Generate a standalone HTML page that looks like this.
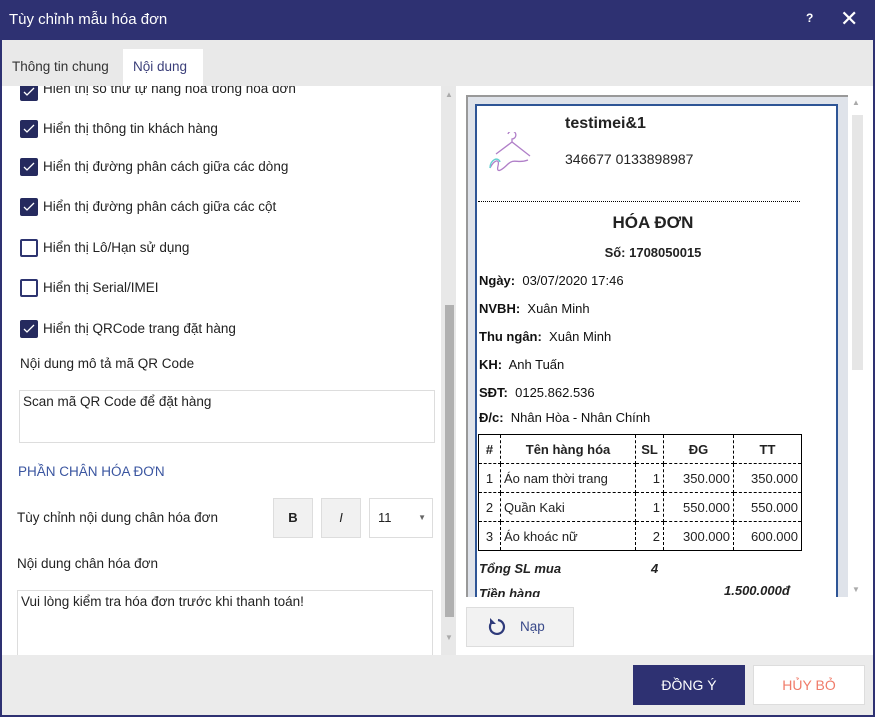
<!DOCTYPE html>
<html><head><meta charset="utf-8"><style>
*{box-sizing:border-box;margin:0;padding:0}
body{width:875px;height:717px;position:relative;overflow:hidden;background:#fff;font-family:"Liberation Sans","DejaVu Sans",sans-serif;font-size:13.5px;color:#222}
.abs{position:absolute}
.title{left:0;top:0;width:875px;height:40px;background:#2e3172;color:#fff;font-size:15px;line-height:40px;padding-left:9px}
.tabs{left:0;top:40px;width:875px;height:46px;background:#e9e9e9;border-left:2px solid #2e3172;border-right:2px solid #2e3172}
.cb{left:20px;width:18px;height:18px;border-radius:2px;background:#252a5e}
.cb svg{position:absolute;left:3px;top:4px}
.cbo{left:20px;width:18px;height:18px;border-radius:2px;border:2px solid #2d3470;background:#fff}
.lbl{left:43px;font-size:13.5px;color:#222}
.box{border:1px solid #ddd;background:#fff}
.inv{font-size:13px;color:#111}
.b{font-weight:bold}
td{border:1px dashed #000;font-size:13px;height:29px;padding:0 3px}
table{border-collapse:collapse;border:1.5px solid #000}
</style></head><body>
<div class="abs title">Tùy chỉnh mẫu hóa đơn</div>
<div class="abs" style="left:806px;top:11px;color:#fff;font-weight:bold;font-size:12px">?</div>
<div class="abs" style="left:840px;top:6px;color:#fff;font-size:22px;font-weight:bold">✕</div>
<div class="abs tabs"></div>
<div class="abs" style="left:12px;top:59px;font-size:13.5px;color:#333">Thông tin chung</div>
<div class="abs" style="left:123px;top:49px;width:80px;height:38px;background:#fff;color:#3b3f7a;font-size:13.5px;padding:10px 0 0 10px">Nội dung</div>
<div class="abs" style="left:0;top:86px;width:2px;height:570px;background:#2e3172"></div>
<div class="abs" style="left:873px;top:86px;width:2px;height:570px;background:#2e3172"></div>

<!-- left list -->
<div class="abs" style="left:2px;top:86px;width:454px;height:569px;overflow:hidden">
<div class="abs cb" style="left:18px;top:-3px"><svg width="12" height="10"><path d="M1 5l3 3 7-7" stroke="#fff" stroke-width="1.3" fill="none"/></svg></div>
<div class="abs lbl" style="left:41px;top:-5px">Hiển thị số thứ tự hàng hóa trong hóa đơn</div>
</div>
<div class="abs cb" style="top:120px"><svg width="12" height="10"><path d="M1 5l3 3 7-7" stroke="#fff" stroke-width="1.3" fill="none"/></svg></div>
<div class="abs lbl" style="top:121px">Hiển thị thông tin khách hàng</div>
<div class="abs cb" style="top:158px"><svg width="12" height="10"><path d="M1 5l3 3 7-7" stroke="#fff" stroke-width="1.3" fill="none"/></svg></div>
<div class="abs lbl" style="top:159px">Hiển thị đường phân cách giữa các dòng</div>
<div class="abs cb" style="top:198px"><svg width="12" height="10"><path d="M1 5l3 3 7-7" stroke="#fff" stroke-width="1.3" fill="none"/></svg></div>
<div class="abs lbl" style="top:199px">Hiển thị đường phân cách giữa các cột</div>
<div class="abs cbo" style="top:239px"></div>
<div class="abs lbl" style="top:240px">Hiển thị Lô/Hạn sử dụng</div>
<div class="abs cbo" style="top:279px"></div>
<div class="abs lbl" style="top:280px">Hiển thị Serial/IMEI</div>
<div class="abs cb" style="top:320px"><svg width="12" height="10"><path d="M1 5l3 3 7-7" stroke="#fff" stroke-width="1.3" fill="none"/></svg></div>
<div class="abs lbl" style="top:321px">Hiển thị QRCode trang đặt hàng</div>
<div class="abs" style="left:20px;top:356px">Nội dung mô tả mã QR Code</div>
<div class="abs box" style="left:19px;top:390px;width:416px;height:53px;padding:3px 3px;color:#222">Scan mã QR Code để đặt hàng</div>
<div class="abs" style="left:18px;top:464px;color:#3a55a0">PHẦN CHÂN HÓA ĐƠN</div>
<div class="abs" style="left:17px;top:510px">Tùy chỉnh nội dung chân hóa đơn</div>
<div class="abs" style="left:273px;top:498px;width:40px;height:40px;background:#f1f1f1;border:1px solid #ddd;text-align:center;line-height:38px;font-weight:bold;font-size:13px">B</div>
<div class="abs" style="left:321px;top:498px;width:40px;height:40px;background:#f1f1f1;border:1px solid #ddd;text-align:center;line-height:38px;font-style:italic;font-size:13px">I</div>
<div class="abs box" style="left:369px;top:498px;width:64px;height:40px;line-height:38px;padding-left:8px;font-size:13px">11<span style="position:absolute;right:6px;top:0;font-size:8px;color:#666">▼</span></div>
<div class="abs" style="left:17px;top:556px">Nội dung chân hóa đơn</div>
<div class="abs box" style="left:17px;top:590px;width:416px;height:70px;padding:3px 3px">Vui lòng kiểm tra hóa đơn trước khi thanh toán!</div>
<div class="abs" style="left:441px;top:86px;width:15px;height:569px;background:#e8e8e8"></div>
<div class="abs" style="left:445px;top:305px;width:9px;height:312px;background:#b0b0b0"></div>
<div class="abs" style="left:445px;top:90px;font-size:8px;color:#aaa">▲</div>
<div class="abs" style="left:445px;top:633px;font-size:8px;color:#aaa">▼</div>

<!-- preview -->
<div class="abs" style="left:466px;top:95px;width:382px;height:502px;background:#dfe3ea;border-left:2px solid #999;border-top:2px solid #999;overflow:hidden">
<div class="abs" style="left:7px;top:7px;width:363px;height:520px;background:#fff;border:2px solid #2e5596"></div>
<svg class="abs" style="left:18px;top:35px" width="55" height="45"><path d="M22 2a4 4 0 1 1 4 5v3M10 22l16-12 18 14M4 36c4-8 10-10 8-2s4 4 10-2 10 0 20-4" stroke="#b07fc8" stroke-width="1.3" fill="none"/><path d="M4 36c0-8 8-12 10-6" stroke="#66d0d0" stroke-width="1.5" fill="none"/></svg>
<div class="abs b" style="left:97px;top:18px;font-size:16px">testimei&amp;1</div>
<div class="abs" style="left:97px;top:54px;font-size:14px">346677 0133898987</div>
<div class="abs" style="left:10px;top:104px;width:322px;border-top:1px dotted #000"></div>
<div class="abs b" style="left:0;top:116px;width:370px;text-align:center;font-size:17px">HÓA ĐƠN</div>
<div class="abs b" style="left:0;top:148px;width:370px;text-align:center;font-size:13px">Số: 1708050015</div>
<div class="abs inv" style="left:11px;top:176px"><b>Ngày:</b>&nbsp; 03/07/2020 17:46</div>
<div class="abs inv" style="left:11px;top:204px"><b>NVBH:</b>&nbsp; Xuân Minh</div>
<div class="abs inv" style="left:11px;top:232px"><b>Thu ngân:</b>&nbsp; Xuân Minh</div>
<div class="abs inv" style="left:11px;top:260px"><b>KH:</b>&nbsp; Anh Tuấn</div>
<div class="abs inv" style="left:11px;top:288px"><b>SĐT:</b>&nbsp; 0125.862.536</div>
<div class="abs inv" style="left:11px;top:313px"><b>Đ/c:</b>&nbsp; Nhân Hòa - Nhân Chính</div>
<table class="abs" style="left:10px;top:337px;width:324px">
<tr><td class="b" style="text-align:center;width:22px">#</td><td class="b" style="text-align:center;width:135px">Tên hàng hóa</td><td class="b" style="text-align:center;width:28px">SL</td><td class="b" style="text-align:center;width:70px">ĐG</td><td class="b" style="text-align:center">TT</td></tr>
<tr><td style="text-align:center">1</td><td>Áo nam thời trang</td><td style="text-align:right">1</td><td style="text-align:right">350.000</td><td style="text-align:right">350.000</td></tr>
<tr><td style="text-align:center">2</td><td>Quần Kaki</td><td style="text-align:right">1</td><td style="text-align:right">550.000</td><td style="text-align:right">550.000</td></tr>
<tr><td style="text-align:center">3</td><td>Áo khoác nữ</td><td style="text-align:right">2</td><td style="text-align:right">300.000</td><td style="text-align:right">600.000</td></tr>
</table>
<div class="abs b" style="left:11px;top:464px;font-style:italic;font-size:13px">Tổng SL mua</div>
<div class="abs b" style="left:183px;top:464px;font-style:italic;font-size:13px">4</div>
<div class="abs b" style="left:11px;top:489px;font-style:italic;font-size:13px">Tiền hàng</div>
<div class="abs b" style="left:256px;top:486px;font-style:italic;font-size:13px">1.500.000đ</div>
</div>
<div class="abs" style="left:852px;top:115px;width:11px;height:255px;background:#e6e6e6"></div>
<div class="abs" style="left:852px;top:98px;font-size:8px;color:#aaa">▲</div>
<div class="abs" style="left:852px;top:585px;font-size:8px;color:#aaa">▼</div>
<div class="abs" style="left:466px;top:607px;width:108px;height:40px;background:#f2f2f2;border:1px solid #ddd"></div>
<svg class="abs" style="left:486px;top:616px" width="22" height="22"><path d="M6 6a7 7 0 1 0 6-2" stroke="#2e3a7a" stroke-width="2.2" fill="none"/><path d="M4 2v6h6z" fill="#2e3a7a"/></svg>
<div class="abs" style="left:520px;top:619px;color:#3a4a8a">Nạp</div>

<!-- bottom -->
<div class="abs" style="left:0;top:655px;width:875px;height:62px;background:#ebebeb;border:2px solid #2e3172;border-top:none"></div>
<div class="abs" style="left:633px;top:665px;width:112px;height:40px;background:#2e3172;color:#fff;text-align:center;line-height:40px;font-size:14px">ĐỒNG Ý</div>
<div class="abs" style="left:753px;top:665px;width:112px;height:40px;background:#fff;border:1px solid #ddd;color:#f07c6a;text-align:center;line-height:38px;font-size:14px">HỦY BỎ</div>
</body></html>
